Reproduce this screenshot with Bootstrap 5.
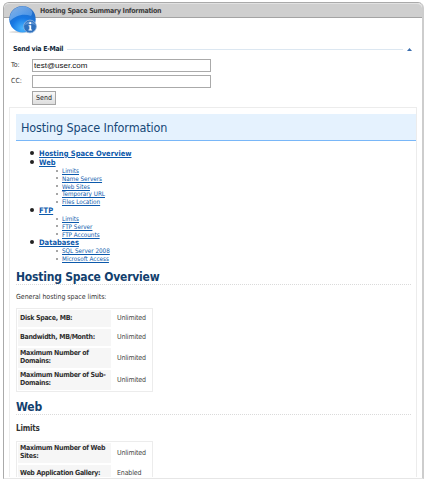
<!DOCTYPE html>
<html lang="en">
<head>
<meta charset="utf-8">
<meta name="viewport" content="width=device-width, initial-scale=1">
<title>Hosting Space Summary Information</title>
<link href="https://cdn.jsdelivr.net/npm/bootstrap@5.3.0/dist/css/bootstrap.min.css" rel="stylesheet">
<style>
body{font:7px/8px "DejaVu Sans Condensed","DejaVu Sans",sans-serif;font-stretch:condensed;color:#333;background:#fff;height:480px;overflow:hidden;white-space:nowrap}
.panel{margin:2px 1px 0 3px;width:421px;height:477px;border:1px solid #aaa;border-right:2px solid #cdcdcd;border-bottom:1px solid #e6e6e6;border-radius:6px 6px 0 0}
.panel-title{height:15px;background:#cfcfcf;border-top:1px solid #e2e2e2;border-bottom:1px solid #a4a4a4;border-radius:5px 5px 0 0;padding-left:36px;font-weight:700;font-size:7px;line-height:14px;color:#3e3e3e;letter-spacing:-.29px}
.globe{position:absolute;left:8px;top:4px;width:30px;height:31px}
.send-head{height:10px;margin-top:26px;padding:0 10px 0 9px;line-height:10px;color:#13293c;font-weight:700;letter-spacing:-.28px}
.send-head .rule{height:1px;background:#dce7f1}
.send-fields{padding-top:3px}
.send-row{height:16px;padding-left:7px}
.send-row label{width:21px}
.send-row .field{width:179px;height:13px;border:1px solid #aaa;border-radius:0;padding:0 1px;font:8px/11px "Liberation Sans",sans-serif;color:#111;min-height:0}
.send-btn{width:24px;height:14px;padding:0;border:1px solid #a5a5a5;border-radius:0;background:linear-gradient(#f8f8f8,#dedede);font-size:7px;line-height:12px;color:#222;margin:2px 0 0 28px}
.report{margin:2px 5px 0 5px;height:370px;border:1px solid #ececec;border-bottom:0;padding:6px 0 0 6px;overflow:hidden}
.report-title{height:27px;margin:0;background:#e5f2fe;border-bottom:1px solid #79b7f8;color:#164877;font-size:12.5px;line-height:27px;font-weight:400;padding-left:5px;letter-spacing:-.13px}
.toc,.toc ul{list-style:none;padding:0;margin:0}
.toc{padding:8px 0 0 14px}
.toc a{color:#0c59ab;text-decoration:underline;text-decoration-thickness:.6px;text-underline-offset:.8px}
.toc>li{font-weight:700;font-size:7.5px;line-height:9.1px}
.toc>li::before{content:"";display:inline-block;width:4px;height:4px;border-radius:50%;background:#222;margin-right:5px;vertical-align:1px}
.toc ul{padding-left:26px;font-weight:400;font-size:6.3px;line-height:7.75px}
.toc ul li::before{content:"";display:inline-block;width:2px;height:2px;border-radius:50%;background:#888;margin-right:4px;vertical-align:1.5px}
.section-title{height:15px;margin:7px 5px 0 0;font-size:12px;line-height:14px;font-weight:700;color:#12406e;border-bottom:1px dotted #dadada;letter-spacing:-.21px}
.intro{margin:8px 0 7px;letter-spacing:-.05px}
.limits-title{font-size:8px;line-height:10px;font-weight:700;margin:9px 0 7px;letter-spacing:-.2px}
.limits{border:1px solid #ececec;width:137px;display:block}
.limits tbody{display:flex;flex-direction:column;gap:2px;padding:1px}
.limits tr{display:flex;height:20px}
.limits tr.single{height:17px}
.limits tr>*{display:flex;align-items:center}
.limits th{width:93px;background:#f6f6f6;padding-left:2px;line-height:7.7px;letter-spacing:-.31px;color:#303030}
.limits td{padding-left:6px;letter-spacing:-.17px;color:#444}
</style>
<script src="https://cdn.jsdelivr.net/npm/bootstrap@5.3.0/dist/js/bootstrap.bundle.min.js"></script>
</head>
<body>
<main class="panel">
  <div class="panel-title">Hosting Space Summary Information</div>
  <svg class="globe" viewBox="0 0 30 31">
    <defs>
      <radialGradient id="ball" cx=".5" cy=".85" r=".8"><stop offset="0" stop-color="#48b5ff"/><stop offset=".5" stop-color="#1879e4"/><stop offset="1" stop-color="#2468bf"/></radialGradient>
      <linearGradient id="shine" x2="1" y2="1"><stop offset="0" stop-color="#cbe5ff"/><stop offset="1" stop-color="#4b9af0"/></linearGradient>
    </defs>
    <ellipse cx="13" cy="28" rx="12" ry="1.2" fill="#ddd"/>
    <circle cx="14.5" cy="15.2" r="13.2" fill="url(#ball)"/>
    <path d="M2 17C0 6 12-1 21 4c4 3 4 5 2 8C15 9 7 12 2 17Z" fill="url(#shine)" opacity=".6"/>
    <circle cx="22" cy="22.5" r="6.4" fill="#2e70bd" stroke="#97b9df" stroke-width=".8"/>
    <path d="M16.5 21a6 6 0 0 1 11 0q-5-2-11 0Z" fill="#5c94d5"/>
    <circle cx="22.2" cy="19.2" r="1.1" fill="#fff"/><path d="M20.6 21.2h2.6v4.4h.9v1h-3.6v-1h.9v-3.4h-.8Z" fill="#fff"/>
  </svg>
  <section>
    <div class="send-head d-flex align-items-center"><span>Send via E-Mail</span><span class="rule flex-grow-1 ms-1"></span>
      <svg class="ms-1" width="5" height="3" viewBox="0 0 5 3"><path d="M0 3 2.5 0 5 3Z" fill="#3c6eae"/></svg>
    </div>
    <div class="send-fields">
      <div class="send-row d-flex align-items-center"><label for="to">To:</label><input id="to" class="form-control field" value="test@user.com"></div>
      <div class="send-row d-flex align-items-center"><label for="cc">CC:</label><input id="cc" class="form-control field"></div>
      <button class="btn send-btn d-block">Send</button>
    </div>
  </section>
  <article class="report">
    <h1 class="report-title">Hosting Space Information</h1>
    <ul class="toc">
      <li><a href="#overview">Hosting Space Overview</a></li>
      <li><a href="#web">Web</a>
        <ul><li><a href="#limits">Limits</a></li><li><a href="#">Name Servers</a></li><li><a href="#">Web Sites</a></li><li><a href="#">Temporary URL</a></li><li><a href="#">Files Location</a></li></ul></li>
      <li><a href="#">FTP</a>
        <ul><li><a href="#">Limits</a></li><li><a href="#">FTP Server</a></li><li><a href="#">FTP Accounts</a></li></ul></li>
      <li><a href="#">Databases</a>
        <ul><li><a href="#">SQL Server 2008</a></li><li><a href="#">Microsoft Access</a></li></ul></li>
    </ul>
    <h2 class="section-title" id="overview">Hosting Space Overview</h2>
    <p class="intro">General hosting space limits:</p>
    <table class="limits"><tbody>
      <tr class="single"><th>Disk Space, MB:</th><td>Unlimited</td></tr>
      <tr class="single"><th>Bandwidth, MB/Month:</th><td>Unlimited</td></tr>
      <tr><th>Maximum Number of<br>Domains:</th><td>Unlimited</td></tr>
      <tr><th>Maximum Number of Sub-<br>Domains:</th><td>Unlimited</td></tr>
    </tbody></table>
    <h2 class="section-title mt-2" id="web">Web</h2>
    <h3 id="limits" class="limits-title">Limits</h3>
    <table class="limits"><tbody>
      <tr><th>Maximum Number of Web<br>Sites:</th><td>Unlimited</td></tr>
      <tr class="single"><th>Web Application Gallery:</th><td>Enabled</td></tr>
    </tbody></table>
  </article>
</main>
</body>
</html>
